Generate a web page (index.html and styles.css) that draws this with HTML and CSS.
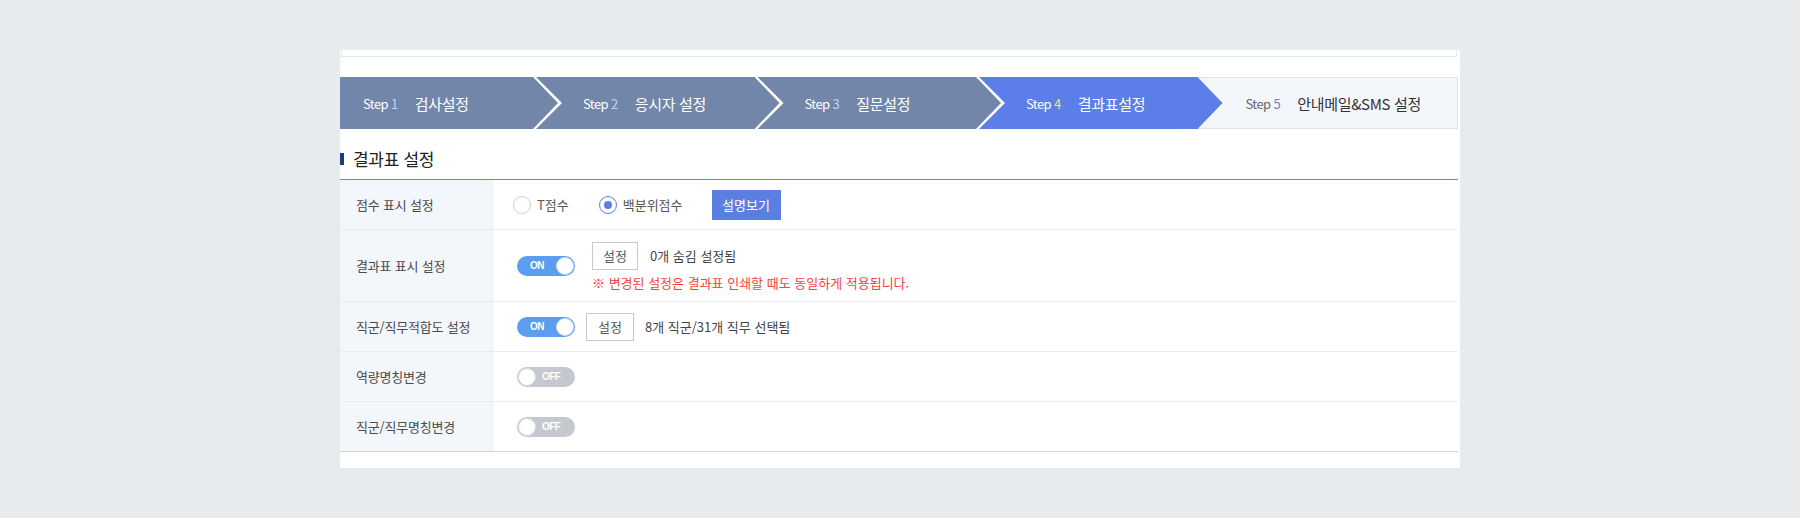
FILE: index.html
```html
<!DOCTYPE html>
<html lang="ko">
<head>
<meta charset="utf-8">
<title>결과표 설정</title>
<link rel="stylesheet" href="styles.css">
</head>
<body>
<div class="panel">
  <div class="top-box"></div>
  <ol class="steps">
    <li class="step s1 done"><span class="step-no">Step <em>1</em></span><span class="step-name">검사설정</span></li>
    <li class="step s2 done"><span class="step-no">Step <em>2</em></span><span class="step-name">응시자 설정</span></li>
    <li class="step s3 done"><span class="step-no">Step <em>3</em></span><span class="step-name">질문설정</span></li>
    <li class="step s4 current"><span class="step-no">Step <em>4</em></span><span class="step-name">결과표설정</span></li>
    <li class="step s5 todo"><span class="step-no">Step <em>5</em></span><span class="step-name">안내메일&amp;SMS 설정</span></li>
  </ol>
  <h2 class="sec-title"><span class="sec-bar"></span>결과표 설정</h2>
  <div class="table">
    <div class="row row-score">
      <div class="th">점수 표시 설정</div>
      <div class="td">
        <label class="radio"><span class="radio-dot"></span>T점수</label>
        <label class="radio checked"><span class="radio-dot"></span>백분위점수</label>
        <button class="btn-primary" type="button">설명보기</button>
      </div>
    </div>
    <div class="row row-tall">
      <div class="th">결과표 표시 설정</div>
      <div class="td">
        <span class="toggle on"><span class="tg-text">ON</span><span class="knob"></span></span>
        <div class="stack">
          <div class="line">
            <button class="btn-line" type="button">설정</button>
            <span class="desc">0개 숨김 설정됨</span>
          </div>
          <p class="note">※ 변경된 설정은 결과표 인쇄할 때도 동일하게 적용됩니다.</p>
        </div>
      </div>
    </div>
    <div class="row">
      <div class="th">직군/직무적합도 설정</div>
      <div class="td">
        <span class="toggle on"><span class="tg-text">ON</span><span class="knob"></span></span>
        <button class="btn-line narrow-gap" type="button">설정</button>
        <span class="desc desc-near">8개 직군/31개 직무 선택됨</span>
      </div>
    </div>
    <div class="row">
      <div class="th">역량명칭변경</div>
      <div class="td">
        <span class="toggle off"><span class="knob"></span><span class="tg-text">OFF</span></span>
      </div>
    </div>
    <div class="row last">
      <div class="th">직군/직무명칭변경</div>
      <div class="td">
        <span class="toggle off"><span class="knob"></span><span class="tg-text">OFF</span></span>
      </div>
    </div>
  </div>
</div>
</body>
</html>
```

FILE: styles.css
```css
* { box-sizing: border-box; }
html, body { margin: 0; padding: 0; }
body {
  background: #e8ebee;
  font-family: "Noto Sans CJK KR", "Noto Sans", sans-serif;
  color: #444;
  height: 518px;
  overflow: hidden;
}
.panel {
  margin: 50px 0 0 340px;
  width: 1120px;
  height: 418px;
  background: #fff;
  padding: 0 2px 0 0;
}
.top-box {
  height: 7px;
  margin: 0 1px 0 1px;
  border: 1px solid #e1e7ef;
  border-top: none;
}
.steps {
  list-style: none;
  margin: 20px 0 0 0;
  padding: 0;
  display: flex;
  height: 52px;
}
.step {
  position: relative;
  display: flex;
  align-items: center;
  height: 52px;
  padding-left: 50px;
  font-size: 15px;
  letter-spacing: -0.3px;
  color: #fff;
  flex: 0 0 221.5px;
}
.step.s1 { flex-basis: 193px; padding-left: 23px; z-index: 5; }
.step.s2 { z-index: 4; }
.step.s3 { z-index: 3; }
.step.s4 { z-index: 2; }
.step.s5 { flex: 1 1 auto; padding-left: 48px; z-index: 1; }
.step.done { background: #7186a9; }
.step.current { background: #5c7ee8; }
.step.todo {
  background: #f3f6fb;
  border: 1px solid #dde3ec;
  border-left: none;
  color: #333;
}
.step::before, .step::after {
  content: "";
  position: absolute;
  top: 0;
  left: 100%;
  height: 52px;
}
.step::before {
  width: 29px;
  background: #fff;
  clip-path: polygon(0 0, 3px 0, 29px 26px, 3px 52px, 0 52px);
}
.step::after {
  width: 25px;
  clip-path: polygon(0 0, 25px 26px, 0 52px);
}
.step.done::after { background: #7186a9; }
.step.current::after { background: #5c7ee8; }
.step.current::before { display: none; }
.step.todo::before, .step.todo::after { display: none; }
.step-no {
  font-size: 13px;
  letter-spacing: -0.6px;
  margin-right: 17px;
}
.step-no em { font-style: normal; color: #b9d3ff; }
.step.current .step-no em { color: #f2e27c; }
.step.todo .step-no { color: #666; }
.step.todo .step-no em { color: #6f84c2; }
.step-name { white-space: nowrap; }

.sec-title {
  margin: 0;
  padding: 20px 0 10px 0;
  height: 50px;
  display: flex;
  align-items: center;
  font-size: 17px;
  line-height: 20px;
  font-weight: 400;
  letter-spacing: -0.3px;
  color: #222;
}
.sec-bar {
  width: 4px;
  height: 12px;
  background: #1e3a78;
  margin-right: 9px;
}

.table {
  border-top: 1px solid #7c86ab;
  border-bottom: 1px solid #cdd5e0;
}
.row {
  display: flex;
  min-height: 50px;
  border-bottom: 1px solid #ebebeb;
}
.row.row-tall { min-height: 72px; }
.row.last { border-bottom: none; min-height: 49px; }
.th {
  flex: 0 0 154px;
  background: #f3f6fb;
  padding-left: 16px;
  display: flex;
  align-items: center;
  font-size: 13px;
  color: #4a4a4a;
  letter-spacing: -0.2px;
}
.td {
  flex: 1 1 auto;
  display: flex;
  align-items: center;
  padding-left: 19px;
  font-size: 13px;
  color: #444;
}
.radio {
  display: flex;
  align-items: center;
  margin-right: 30px;
  color: #555;
}
.radio-dot {
  width: 18px;
  height: 18px;
  border-radius: 50%;
  border: 1px solid #cfcfcf;
  background: #fff;
  margin-right: 6px;
  display: flex;
  align-items: center;
  justify-content: center;
}
.radio.checked .radio-dot { border: 1.5px solid #5b7fe0; }
.radio.checked .radio-dot::after {
  content: "";
  width: 8px;
  height: 8px;
  border-radius: 50%;
  background: #5b7fe0;
}
.btn-primary {
  margin-left: -1px;
  width: 69px;
  height: 30px;
  border: none;
  background: #5b7fe0;
  color: #fff;
  font-family: inherit;
  font-size: 13px;
  padding: 0;
}
.toggle {
  margin-left: 4px;
  width: 58px;
  height: 20px;
  border-radius: 10px;
  display: flex;
  align-items: center;
  padding: 0 1px;
  flex: 0 0 auto;
}
.toggle.on { background: #5b9ef0; justify-content: space-between; padding-left: 13px; }
.toggle.off { background: #c5c8ce; }
.knob {
  width: 18px;
  height: 18px;
  border-radius: 50%;
  background: #fff;
  border: 1px solid #d3dbe8;
}
.tg-text {
  font-family: "Liberation Sans", Arial, sans-serif;
  font-size: 10px;
  font-weight: 700;
  letter-spacing: -0.6px;
  color: #fff;
}
.toggle.off .tg-text { margin-left: 6px; }
.stack {
  margin-left: 17px;
  display: flex;
  flex-direction: column;
  padding: 11px 0 8px 0;
}
.line { display: flex; align-items: center; }
.btn-line {
  width: 46px;
  height: 28px;
  border: 1px solid #c9c9c9;
  background: #fff;
  color: #555;
  font-family: inherit;
  font-size: 13px;
  padding: 0;
}
.btn-line.narrow-gap { margin-left: 11px; width: 48px; }
.desc { margin-left: 12px; color: #444; }
.desc.desc-near { margin-left: 11px; }
.note {
  margin: 3px 0 0 0;
  font-size: 13px;
  line-height: 20px;
  color: #f4433c;
  letter-spacing: 0;
}
```
